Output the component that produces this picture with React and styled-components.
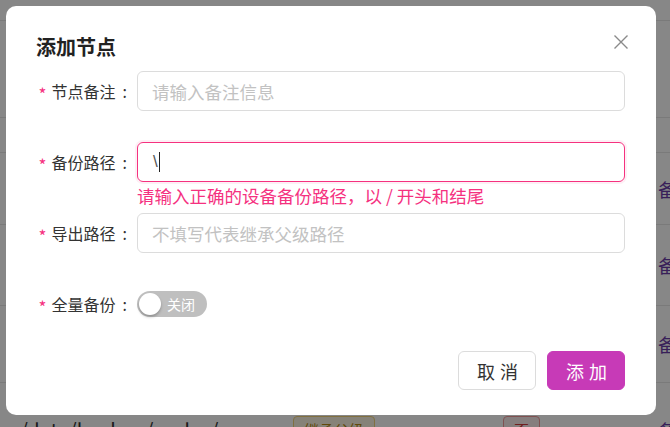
import React from 'react';
import styled, {createGlobalStyle} from 'styled-components';

const PINK = '#f5317f';
const BRAND = '#c73ab7';

const rows = [
  {h: 21},
  {h: 97},
  {h: 35},
  {h: 72, action: '备份'},
  {h: 81, action: '备份'},
  {h: 77, action: '备份'},
  {h: 94, action: '备份', path: '/data/backup/nodes/', inherit: '继承父级', flag: '否'},
];

const fields = [
  {label: '节点备注', placeholder: '请输入备注信息'},
  {label: '备份路径', value: '\\', error: '请输入正确的设备备份路径，以 / 开头和结尾'},
  {label: '导出路径', placeholder: '不填写代表继承父级路径'},
];

const App = () => {
  return (
    <>
      <GlobalStyle/>
      <Page>
        {rows.map((row, key) =>
          <TableRow key={key} style={{height: row.h}}>
            <PathCell>{row.path}</PathCell>
            <div>{row.inherit && <Tag tone="warn">{row.inherit}</Tag>}</div>
            <div>{row.flag && <Tag tone="danger">{row.flag}</Tag>}</div>
            <ActionCell>{row.action}</ActionCell>
          </TableRow>
        )}
      </Page>
      <Overlay>
        <Dialog>
          <DialogHead>
            <Title>添加节点</Title>
            <CloseButton aria-label="close">
              <svg width="16" height="16" viewBox="0 0 16 16">
                <path d="M1.5 1.5L14.5 14.5M14.5 1.5L1.5 14.5" stroke="#8a8a8a" strokeWidth="1.4" fill="none"/>
              </svg>
            </CloseButton>
          </DialogHead>
          <Form>
            {fields.map((f, key) =>
              <FormItem key={key}>
                <Label><Star>*</Star>{f.label}<Colon>:</Colon></Label>
                <Control>
                  <InputBox invalid={!!f.error}>
                    {f.value !== undefined
                      ? <Typed>{f.value}<Caret/></Typed>
                      : <Field placeholder={f.placeholder} readOnly/>}
                  </InputBox>
                  <Help>{f.error}</Help>
                </Control>
              </FormItem>
            )}
            <FormItem>
              <Label><Star>*</Star>全量备份<Colon>:</Colon></Label>
              <Control>
                <SwitchRow>
                  <Switch>
                    <Knob/>
                    <SwitchText>关闭</SwitchText>
                  </Switch>
                </SwitchRow>
              </Control>
            </FormItem>
          </Form>
          <Footer>
            <Button>取消</Button>
            <Button primary>添加</Button>
          </Footer>
        </Dialog>
      </Overlay>
    </>
  )
}

const GlobalStyle = createGlobalStyle`
    html, body {
        margin: 0;
        padding: 0;
        width: 670px;
        height: 427px;
        overflow: hidden;
        background: #fff;
        font-family: "Noto Sans CJK SC", "Noto Sans", sans-serif;
    }
`;

const Page = styled.div`
    display: flex;
    flex-direction: column;
    width: 670px;
    height: 427px;
    overflow: hidden;
`;

const TableRow = styled.div`
    display: grid;
    grid-template-columns: 293px 210px 155px 1fr;
    align-items: center;
    flex-shrink: 0;
    border-bottom: 1px solid #e6e6e6;
    box-sizing: border-box;
`;

const PathCell = styled.div`
    padding-left: 20px;
    font-size: 20px;
    color: #333;
`;

const Tag = styled.span`
    display: inline-block;
    padding: 2px 10px;
    border-radius: 4px;
    font-size: 15px;
    border: 1px solid ${props => props.tone === 'warn' ? '#f3d37a' : '#f19a9a'};
    background: ${props => props.tone === 'warn' ? '#fdf6e3' : '#fdeeee'};
    color: ${props => props.tone === 'warn' ? '#b88a14' : '#d23b3b'};
`;

const ActionCell = styled.div`
    font-size: 18px;
    color: #6a3ca8;
    white-space: nowrap;
`;

const Overlay = styled.div`
    position: fixed;
    inset: 0;
    background: rgba(0, 0, 0, .47);
    display: flex;
    align-items: flex-start;
    padding: 6px 0 0 6px;
`;

const Dialog = styled.div`
    width: 650px;
    height: 409px;
    box-sizing: border-box;
    background: #fff;
    border-radius: 10px;
    padding: 28px 31px 25px 30px;
    display: flex;
    flex-direction: column;
`;

const DialogHead = styled.div`
    display: flex;
    align-items: center;
    justify-content: space-between;
    margin-bottom: 11px;
`;

const Title = styled.div`
    font-size: 20px;
    line-height: 26px;
    font-weight: bold;
    color: #222;
`;

const CloseButton = styled.div`
    display: flex;
    width: 16px;
    height: 16px;
    margin: -10px -4px 0 0;
    cursor: pointer;
`;

const Form = styled.div`
    display: flex;
    flex-direction: column;
    flex: 1;
`;

const FormItem = styled.div`
    display: flex;
    align-items: flex-start;
`;

const Label = styled.div`
    width: 101px;
    height: 40px;
    box-sizing: border-box;
    padding-right: 10px;
    display: flex;
    align-items: center;
    justify-content: flex-end;
    font-size: 16px;
    color: #333;
    white-space: nowrap;
`;

const Star = styled.span`
    color: ${PINK};
    font-size: 17px;
    margin-right: 5px;
    position: relative;
    top: 2px;
`;

const Colon = styled.span`
    margin-left: 7px;
`;

const Control = styled.div`
    flex: 1;
    display: flex;
    flex-direction: column;
`;

const InputBox = styled.div`
    height: 40px;
    box-sizing: border-box;
    border: 1px solid ${props => props.invalid ? PINK : '#dcdcdc'};
    box-shadow: ${props => props.invalid ? '0 0 0 2px rgba(245, 49, 127, .08)' : 'none'};
    border-radius: 6px;
    display: flex;
    align-items: center;
    padding: 0 14px;
`;

const Field = styled.input`
    flex: 1;
    border: none;
    outline: none;
    padding: 0;
    font-family: inherit;
    font-size: 17.5px;
    color: #333;
    background: transparent;
    &::placeholder {
        color: #c2c2c2;
    }
`;

const Typed = styled.div`
    display: flex;
    align-items: center;
    font-size: 17px;
    color: #555;
    font-family: "Liberation Sans", sans-serif;
    padding-left: 1px;
`;

const Caret = styled.span`
    display: inline-block;
    width: 1px;
    height: 20px;
    background: #222;
    margin-left: 1px;
`;

const Help = styled.div`
    height: 31px;
    box-sizing: border-box;
    padding-top: 2px;
    font-size: 17.5px;
    line-height: 24px;
    color: ${PINK};
    white-space: nowrap;
`;

const SwitchRow = styled.div`
    height: 40px;
    display: flex;
    align-items: center;
`;

const Switch = styled.div`
    width: 70px;
    height: 26px;
    box-sizing: border-box;
    border-radius: 13px;
    background: #bfbfbf;
    display: flex;
    align-items: center;
    padding: 2px;
    gap: 6px;
`;

const Knob = styled.span`
    width: 22px;
    height: 22px;
    border-radius: 50%;
    background: #fff;
    box-shadow: 0 2px 3px rgba(0, 0, 0, .25);
`;

const SwitchText = styled.span`
    font-size: 14px;
    color: #fff;
`;

const Footer = styled.div`
    display: flex;
    justify-content: flex-end;
    gap: 11px;
`;

const Button = styled.div`
    height: 39px;
    box-sizing: border-box;
    display: flex;
    align-items: center;
    padding: 0 12px 0 18px;
    border-radius: 6px;
    font-size: 18px;
    letter-spacing: 5px;
    cursor: pointer;
    border: 1px solid ${props => props.primary ? BRAND : '#dcdcdc'};
    background: ${props => props.primary ? BRAND : '#fff'};
    color: ${props => props.primary ? '#fff' : '#333'};
`;

export default App;
